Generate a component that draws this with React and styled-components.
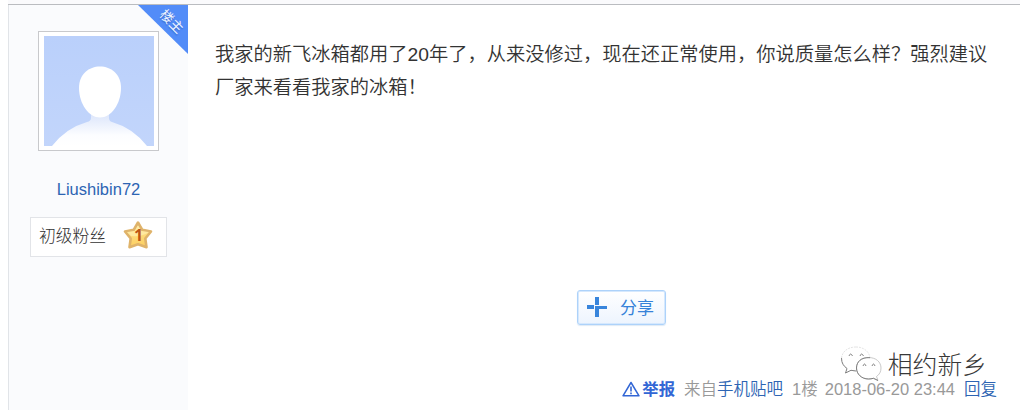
import React from "react";
import styled, { createGlobalStyle } from "styled-components";

const GlobalStyle = createGlobalStyle`
  * {
    box-sizing: border-box;
  }
  body {
    margin: 0;
    background: #fff;
    overflow: hidden;
    font-family: "Liberation Sans", "Noto Sans CJK SC", sans-serif;
    font-size: 16.5px;
    color: #333;
  }
`

const Wrapper = styled.div`
  height: 410px;
  margin-left: 8px;
  border-left: 1px solid #e1e4e8;
  display: flex;
  flex-direction: column;
`

const Divider = styled.div`
  height: 5px;
  margin-left: -1px;
  background: #fafafc;
  border-bottom: 1px solid #babcc0;
`

const Post = styled.div`
  flex: 1;
  display: flex;
`

const Author = styled.div`
  position: relative;
  width: 179px;
  padding-top: 26px;
  background: #fafbfd;
  display: flex;
  flex-direction: column;
  align-items: center;
`

const Corner = styled.div`
  position: absolute;
  top: 0;
  right: 0;
  width: 50px;
  height: 49px;
  background: #528cf8;
  clip-path: polygon(0 0, 100% 0, 100% 100%);
`

const CornerText = styled.span`
  position: absolute;
  top: 7px;
  left: 18px;
  width: 30px;
  line-height: 20px;
  text-align: center;
  font-size: 13.5px;
  color: #f0f5ff;
  text-shadow: 1px 1px 1px #3d6fd0;
  transform: rotate(45deg);
`

const AvatarFrame = styled.div`
  width: 121px;
  height: 120px;
  padding: 4px 4px 4px 5px;
  background: #fff;
  border: 1px solid #c8c9cc;

  > svg {
    display: block;
  }
`

const UserName = styled.a`
  margin-top: 28px;
  line-height: 20px;
  color: #2d64b3;
`

const Level = styled.div`
  width: 137px;
  height: 40px;
  margin: 18px 0 0 0;
  padding: 0 13px 4px 8px;
  display: flex;
  align-items: center;
  justify-content: space-between;
  background: #fff;
  border: 1px solid #e2e4e8;
`

const LevelName = styled.span`
  font-size: 16.8px;
  font-weight: 300;
  color: #333;
`

const Content = styled.div`
  flex: 1;
  padding: 33px 20px 0 27px;
  display: flex;
  flex-direction: column;
`

const Message = styled.div`
  height: 252px;
  width: 780px;
  font-size: 19.25px;
  font-weight: 350;
  line-height: 33px;
  color: #333;
`

const ShareButton = styled.button`
  width: 89px;
  height: 35px;
  margin-left: 362px;
  padding: 0 11px 2px 8px;
  display: flex;
  align-items: center;
  justify-content: space-between;
  background: linear-gradient(#fff, #edf4fe);
  border: 1px solid #add2fa;
  border-radius: 3px;
  box-shadow: inset 0 0 0 1px #d5e8fd, 0 1px 1px #dfeaf6;
  font-family: inherit;
  font-size: 17px;
  color: #3682d9;
`

const Watermark = styled.div`
  height: 38px;
  margin: 20px 13px 0 0;
  display: flex;
  align-items: center;
  justify-content: flex-end;
  gap: 6px;
  font-size: 24.8px;
  font-weight: 300;
  color: #383838;
`

const WatermarkName = styled.span`
  padding-top: 4px;
  line-height: 34px;
`

const Footer = styled.div`
  height: 24px;
  margin: -6px 3px 0 0;
  display: flex;
  align-items: center;
  justify-content: flex-end;
  line-height: 24px;
  white-space: pre;
  font-weight: 350;
  color: #999;
`

const Link = styled.a`
  color: #2d64b3;
`

const Report = styled.a`
  margin-right: 9px;
  display: flex;
  align-items: center;
  gap: 2px;
  font-size: 16.4px;
  font-weight: 700;
  color: #3266d5;
`

const Floor = styled.span`
  margin: 0 7px 0 9px;
`

const Reply = styled(Link)`
  margin-left: 9px;
`

const AvatarPicture = () => (
  <svg width="110" height="110" viewBox="0 0 110 110">
    <defs>
      <linearGradient id="avatarBack" x1="0" y1="0" x2="0" y2="1">
        <stop offset="0" stopColor="#bad0fb" />
        <stop offset="1" stopColor="#c2d5fb" />
      </linearGradient>
      <linearGradient id="avatarBody" x1="0" y1="0" x2="0" y2="1">
        <stop offset="0" stopColor="#d6e1fa" />
        <stop offset="0.7" stopColor="#fcfdff" />
        <stop offset="1" stopColor="#fff" />
      </linearGradient>
    </defs>
    <rect width="110" height="110" fill="url(#avatarBack)" />
    <path d="M47 74V82Q47 85 43 86Q22 92 8 110H103Q89 92 68 86Q65 85 65 82V74Z" fill="url(#avatarBody)" />
    <path d="M56 30.500C67 30.500 77 38 77 52C77 68 67 81.500 56 81.500C45 81.500 35 68 35 52C35 38 45 30.500 56 30.500Z" fill="#fff" />
  </svg>
)

const LevelStar = () => (
  <svg width="30" height="30" viewBox="0 0 30 30">
    <defs>
      <linearGradient id="star" x1="0" y1="0" x2="0" y2="1">
        <stop offset="0" stopColor="#ffe594" />
        <stop offset="1" stopColor="#fccf60" />
      </linearGradient>
    </defs>
    <path
      d="M15 2.500L19.300 9.800L28 11.500L22.300 18.500L23.500 27.200L15 24.300L6.500 27.200L7.700 18.500L2 11.500L10.700 9.800Z"
      fill="url(#star)"
      stroke="#dfb36a"
      strokeWidth="2.600"
      strokeLinejoin="round"
    />
    <path d="M4 12L12 11L15 5L18 11L26 12Q20 17 8 16Z" fill="#fff2b8" opacity="0.6" />
    <text x="15.500" y="20.500" textAnchor="middle" fontFamily="Open Sans, sans-serif" fontSize="16" fontWeight="700" fill="#bd5414">1</text>
  </svg>
)

const PlusIcon = () => (
  <svg width="22" height="22" viewBox="0 0 22 22" fill="#3885dc">
    <path d="M9 1H13V9H9ZM1 9H8V13H1ZM9 10H21V13H13V21H9Z" />
  </svg>
)

const WarningIcon = () => (
  <svg width="18" height="16" viewBox="0 0 18 16" fill="none" stroke="#3266d5">
    <path d="M9 1.500L17 14.800H1Z" strokeWidth="1.500" strokeLinejoin="round" />
    <path d="M9 5.500V10.500M9 11.500V13.200" strokeWidth="1.600" />
  </svg>
)

// only the lower edges of the bubbles are dark, the rest fades into the page
const WechatIcon = () => (
  <svg width="42" height="36" viewBox="0 0 42 36" fill="#fff" strokeLinejoin="round">
    <path
      d="M16 1C7 1 1.500 6.500 1.500 13C1.500 17 3.500 20 7 22.500L5.500 27L11 24.300C23 27 30 20 30 13C30 6 24 1 16 1Z"
      stroke="#ddd"
      strokeWidth="0.800"
      strokeDasharray="2 1"
    />
    <path d="M1.500 12C1.500 17 3.500 20 7 22.500L5.500 27L11 24.300L16 25" fill="none" stroke="#777" strokeWidth="0.900" />
    <path
      d="M28.500 11.500C21 11.500 16.500 16 16.500 22C16.500 28 21.500 33 28.500 33Q31 33 33.500 32.300L38 34.500L36.500 30.500Q41 27.500 41 22C41 16 36 11.500 28.500 11.500Z"
      stroke="#bbb"
      strokeWidth="0.800"
    />
    <path d="M30 11.700C21 11 16.500 16 16.500 22C16.500 28 21.500 33 28.500 33Q31 33 33.500 32.300L38 34.500" fill="none" stroke="#777" strokeWidth="0.900" />
    <path d="M9 10Q10.500 6 12.500 10M20 10Q21.500 6 23.500 10M23 20Q24.500 16 26 20M32 20Q33.500 16 35 20" fill="none" stroke="#777" strokeWidth="0.900" />
  </svg>
)

const App = () => {
  return (
    <>
      <GlobalStyle />
      <Wrapper>
        <Divider />
        <Post>
          <Author>
            <Corner><CornerText>楼主</CornerText></Corner>
            <AvatarFrame><AvatarPicture /></AvatarFrame>
            <UserName>Liushibin72</UserName>
            <Level>
              <LevelName>初级粉丝</LevelName>
              <LevelStar />
            </Level>
          </Author>
          <Content>
            <Message>
              我家的新飞冰箱都用了20年了，从来没修过，现在还正常使用，你说质量怎么样？强烈建议厂家来看看我家的冰箱！
            </Message>
            <ShareButton><PlusIcon />分享</ShareButton>
            <Watermark>
              <WechatIcon />
              <WatermarkName>相约新乡</WatermarkName>
            </Watermark>
            <Footer>
              <Report><WarningIcon />举报</Report>
              来自<Link>手机贴吧</Link>
              <Floor>1楼</Floor>
              <span>2018-06-20 23:44</span>
              <Reply>回复</Reply>
            </Footer>
          </Content>
        </Post>
      </Wrapper>
    </>
  );
};

export default App;
